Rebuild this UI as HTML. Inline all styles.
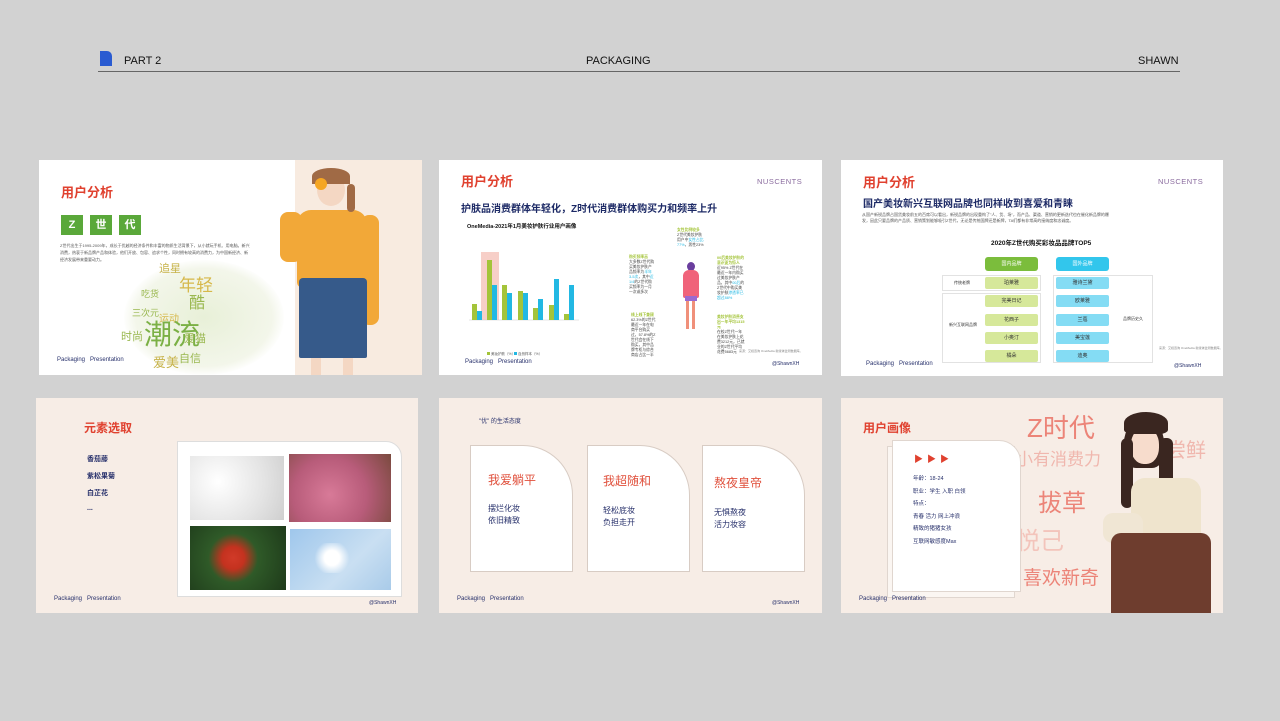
<!DOCTYPE html>
<html><head><meta charset="utf-8">
<style>
*{margin:0;padding:0;box-sizing:border-box}
body{width:1280px;height:721px;background:#d2d2d2;position:relative;overflow:hidden;font-family:"Liberation Sans","Noto Sans CJK SC",sans-serif}
.a{position:absolute}
.s{position:absolute;overflow:hidden}
.w{background:#fff}
.c{background:#f7ede6}
.red{color:#e0412f;font-weight:bold}
.navy{color:#27306b}
.ft{font-size:6px;color:#27306b;white-space:nowrap}
.hd{font-size:11px;color:#111;letter-spacing:0}
</style></head><body>
<!-- header -->
<div class="a" style="left:100px;top:51px;width:12px;height:15px;background:#2a5bd1;border-radius:0 5px 0 0"></div>
<div class="a hd" style="left:124px;top:55px">PART 2</div>
<div class="a hd" style="left:586px;top:55px">PACKAGING</div>
<div class="a hd" style="left:1138px;top:55px">SHAWN</div>
<div class="a" style="left:98px;top:71px;width:1082px;height:1px;background:#666"></div>

<!-- slide1 -->
<div class="s w" style="left:39px;top:160px;width:383px;height:215px">
 <div class="a red" style="left:22px;top:22px;font-size:13px">用户分析</div>
 <div class="a" style="left:22px;top:55px;width:22px;height:20px;background:#5aa83a;color:#fff;font-weight:bold;font-size:11px;text-align:center;line-height:20px">Z</div>
 <div class="a" style="left:51px;top:55px;width:22px;height:20px;background:#5aa83a;color:#fff;font-weight:bold;font-size:11px;text-align:center;line-height:20px">世</div>
 <div class="a" style="left:80px;top:55px;width:22px;height:20px;background:#5aa83a;color:#fff;font-weight:bold;font-size:11px;text-align:center;line-height:20px">代</div>
 <div class="a" style="left:21px;top:82px;width:190px;font-size:4px;line-height:7px;color:#555">Z世代出生于1995-2009年，成长于优越的经济条件和丰富的物质生活背景下，从小就玩手机、用电脑。新兴消费，热衷于新品牌产品和体验，他们开放、包容、追求个性，同时拥有较高的消费力，为中国新经济、新经济发展带来重要动力。</div>
 <div class="a" style="left:85px;top:100px;width:160px;height:115px;border-radius:50%;background:radial-gradient(ellipse,#e8f0d8 0%,#f3f6ea 60%,rgba(255,255,255,0) 72%)"></div>
 <div class="a" style="left:120px;top:100px;font-size:11px;color:#c7b34a">追星</div>
 <div class="a" style="left:140px;top:111px;font-size:17px;color:#d6b84a">年轻</div>
 <div class="a" style="left:102px;top:127px;font-size:9px;color:#9ab850">吃货</div>
 <div class="a" style="left:150px;top:129px;font-size:16px;color:#9ab850">酷</div>
 <div class="a" style="left:120px;top:150px;font-size:10px;color:#d6b84a">运动</div>
 <div class="a" style="left:93px;top:146px;font-size:9px;color:#9ab850">三次元</div>
 <div class="a" style="left:105px;top:153px;font-size:28px;color:#7bb045">潮流</div>
 <div class="a" style="left:82px;top:168px;font-size:11px;color:#9ab850">时尚</div>
 <div class="a" style="left:145px;top:170px;font-size:11px;color:#9ab850">爱猫</div>
 <div class="a" style="left:114px;top:192px;font-size:13px;color:#c7b34a">爱美</div>
 <div class="a" style="left:140px;top:190px;font-size:11px;color:#9ab850">自信</div>
 <div class="a ft" style="left:18px;top:197px">Packaging &nbsp; Presentation</div>
 <div class="a" style="left:256px;top:0;width:127px;height:215px;background:#f8ebe0"></div>
 <div class="a" style="left:258px;top:50px;width:70px;height:78px;background:#f2a838;border-radius:14px 14px 6px 6px"></div>
 <div class="a" style="left:241px;top:52px;width:22px;height:50px;background:#f2a838;border-radius:8px"></div>
 <div class="a" style="left:322px;top:55px;width:18px;height:110px;background:#f2a838;border-radius:8px"></div>
 <div class="a" style="left:278px;top:14px;width:28px;height:32px;background:#f4d7c3;border-radius:50%"></div>
 <div class="a" style="left:273px;top:8px;width:38px;height:16px;background:#a06a45;border-radius:50% 50% 0 0"></div>
 <div class="a" style="left:308px;top:24px;width:8px;height:28px;background:#a06a45;border-radius:4px"></div>
 <div class="a" style="left:276px;top:18px;width:12px;height:12px;background:#f5a623;border-radius:50%"></div>
 <div class="a" style="left:264px;top:115px;width:2px;height:2px"></div>
 <div class="a" style="left:260px;top:118px;width:68px;height:80px;background:#365a8a;border-radius:4px 4px 2px 2px"></div>
 <div class="a" style="left:272px;top:198px;width:10px;height:17px;background:#f4d7c3"></div>
 <div class="a" style="left:304px;top:198px;width:10px;height:17px;background:#f4d7c3"></div>
</div>

<!-- slide2 -->
<div class="s w" style="left:439px;top:160px;width:383px;height:215px">
 <div class="a red" style="left:22px;top:11px;font-size:13px">用户分析</div>
 <div class="a" style="left:318px;top:17px;font-size:7.5px;color:#8a6b9e;letter-spacing:.5px">NUSCENTS</div>
 <div class="a navy" style="left:22px;top:40px;font-size:10px;font-weight:bold;color:#1d2a66">护肤品消费群体年轻化，Z时代消费群体购买力和频率上升</div>
 <div class="a" style="left:28px;top:62px;font-size:5.5px;font-weight:bold;color:#111">OneMedia-2021年1月美妆护肤行业用户画像</div>
 <svg class="a" style="left:0;top:0" width="383" height="215">
  <rect x="42" y="92" width="18" height="68" fill="#f7cfc8"/>
  <line x1="30" y1="160" x2="140" y2="160" stroke="#ccc" stroke-width=".5"/>
  <g fill="#a4c43a">
   <rect x="33" y="144" width="5" height="16"/><rect x="48" y="100" width="5" height="60"/><rect x="63" y="125" width="5" height="35"/><rect x="79" y="131" width="5" height="29"/><rect x="94" y="148" width="5" height="12"/><rect x="110" y="145" width="5" height="15"/><rect x="125" y="154" width="5" height="6"/>
  </g>
  <g fill="#22b8e3">
   <rect x="38" y="151" width="5" height="9"/><rect x="53" y="125" width="5" height="35"/><rect x="68" y="133" width="5" height="27"/><rect x="84" y="133" width="5" height="27"/><rect x="99" y="139" width="5" height="21"/><rect x="115" y="119" width="5" height="41"/><rect x="130" y="125" width="5" height="35"/>
  </g>
  <rect x="48" y="192" width="3" height="3" fill="#a4c43a"/><rect x="75" y="192" width="3" height="3" fill="#22b8e3"/>
  <text x="52" y="195" font-size="3.5" fill="#555">美妆护肤（%）</text><text x="79" y="195" font-size="3.5" fill="#555">自然样本（%）</text>
 </svg>
 <div class="a" style="left:190px;top:95px;width:26px;font-size:3.8px;line-height:5px;color:#444"><b style="color:#a4c43a">购买频率高</b><br>大多数Z世代购买美妆护肤产品频率为<span style="color:#22b8e3">半年3-5次</span>，其中<span style="color:#22b8e3">近1/4</span>的Z世代购买频率为一月一次或多次</div>
 <div class="a" style="left:192px;top:153px;width:26px;font-size:3.8px;line-height:5px;color:#444"><b style="color:#a4c43a">线上线下兼顾</b><br>62.3%的Z世代最近一年在电商平台购买过，57.8%的Z世代会在线下购买，其中品牌专柜与综合商店占比一半</div>
 <div class="a" style="left:238px;top:68px;width:28px;font-size:3.8px;line-height:5px;color:#444"><b style="color:#a4c43a">女性比例较多</b><br>Z世代美妆护肤用户中<span style="color:#22b8e3">女性占比77%</span>，男性23%</div>
 <div class="a" style="left:278px;top:96px;width:28px;font-size:3.8px;line-height:5px;color:#444"><b style="color:#a4c43a">00后美妆护肤的意识更为惊人</b><br>近95% Z世代在最近一年内购买过美妆护肤产品，其中<span style="color:#22b8e3">00后</span>的Z世代中购买美妆护肤<span style="color:#22b8e3">渗透率已超过88%</span></div>
 <div class="a" style="left:278px;top:155px;width:28px;font-size:3.8px;line-height:5px;color:#444"><b style="color:#a4c43a">美妆护肤消费支出一年平均1315元</b><br>在校Z世代一年在美妆护肤上花费3212元，已就业的Z世代平均花费5683元</div>
 <div class="a" style="left:248px;top:102px;width:8px;height:9px;background:#6a3e9e;border-radius:50%"></div>
 <div class="a" style="left:244px;top:110px;width:16px;height:28px;background:#f0637a;border-radius:6px 6px 2px 2px"></div>
 <div class="a" style="left:246px;top:136px;width:12px;height:5px;background:#9a6ad0"></div>
 <div class="a" style="left:247px;top:141px;width:3px;height:28px;background:#f0907a"></div>
 <div class="a" style="left:253px;top:141px;width:3px;height:28px;background:#f0907a"></div>
 <div class="a" style="left:300px;top:189px;font-size:3px;color:#888">来源：艾媒咨询 OneMedia 新媒体监测数据库。</div>
 <div class="a ft" style="left:26px;top:199px">Packaging &nbsp; Presentation</div>
 <div class="a ft" style="left:333px;top:201px;font-size:5px">@ShawnXH</div>
</div>

<!-- slide3 -->
<div class="s w" style="left:841px;top:160px;width:382px;height:216px">
 <div class="a red" style="left:22px;top:12px;font-size:13px">用户分析</div>
 <div class="a" style="left:317px;top:17px;font-size:7.5px;color:#8a6b9e;letter-spacing:.5px">NUSCENTS</div>
 <div class="a" style="left:22px;top:35px;font-size:10px;font-weight:bold;color:#1d2a66">国产美妆新兴互联网品牌也同样收到喜爱和青睐</div>
 <div class="a" style="left:21px;top:52px;width:250px;font-size:4px;line-height:6px;color:#555">从国产新锐品牌占国货美妆前五的百席可以看出，新锐品牌的出现重构了"人、货、场"，而产品、渠道、营销的更新迭代也在催化新品牌的爆发，因此只要品牌的产品质、营销策划能够吸引Z世代，无论是传统国牌还是新牌，TA们都有非常高的接纳度和忠诚度。</div>
 <div class="a" style="left:150px;top:77px;font-size:6.5px;font-weight:bold;color:#111">2020年Z世代购买彩妆品品牌TOP5</div>
 <div class="a" style="left:144px;top:97px;width:53px;height:14px;background:#7bbd3c;border-radius:3px;color:#fff;font-size:5px;text-align:center;line-height:14px">国内品牌</div>
 <div class="a" style="left:215px;top:97px;width:53px;height:14px;background:#32c6ec;border-radius:3px;color:#fff;font-size:5px;text-align:center;line-height:14px">国外品牌</div>
 <div class="a" style="left:101px;top:115px;width:99px;height:16px;border:1px solid #e2e2e2"></div>
 <div class="a" style="left:101px;top:133px;width:99px;height:70px;border:1px solid #e2e2e2"></div>
 <div class="a" style="left:212px;top:115px;width:100px;height:88px;border:1px solid #e2e2e2"></div>
 <div class="a" style="left:113px;top:120px;font-size:4px;color:#333">传统老牌</div>
 <div class="a" style="left:108px;top:162px;font-size:4px;color:#333">新兴互联网品牌</div>
 <div class="a" style="left:282px;top:156px;font-size:4px;color:#333">品牌历史久</div>
 <div class="a" style="left:144px;top:117px;width:53px;height:12px;background:#d6e89a;border-radius:2px;font-size:5px;text-align:center;line-height:12px;color:#333">珀莱雅</div>
 <div class="a" style="left:144px;top:135px;width:53px;height:12px;background:#d6e89a;border-radius:2px;font-size:5px;text-align:center;line-height:12px;color:#333">完美日记</div>
 <div class="a" style="left:144px;top:154px;width:53px;height:12px;background:#d6e89a;border-radius:2px;font-size:5px;text-align:center;line-height:12px;color:#333">花西子</div>
 <div class="a" style="left:144px;top:172px;width:53px;height:12px;background:#d6e89a;border-radius:2px;font-size:5px;text-align:center;line-height:12px;color:#333">小奥汀</div>
 <div class="a" style="left:144px;top:190px;width:53px;height:12px;background:#d6e89a;border-radius:2px;font-size:5px;text-align:center;line-height:12px;color:#333">橘朵</div>
 <div class="a" style="left:215px;top:117px;width:53px;height:12px;background:#84dcf4;border-radius:2px;font-size:5px;text-align:center;line-height:12px;color:#333">雅诗兰黛</div>
 <div class="a" style="left:215px;top:135px;width:53px;height:12px;background:#84dcf4;border-radius:2px;font-size:5px;text-align:center;line-height:12px;color:#333">欧莱雅</div>
 <div class="a" style="left:215px;top:154px;width:53px;height:12px;background:#84dcf4;border-radius:2px;font-size:5px;text-align:center;line-height:12px;color:#333">兰蔻</div>
 <div class="a" style="left:215px;top:172px;width:53px;height:12px;background:#84dcf4;border-radius:2px;font-size:5px;text-align:center;line-height:12px;color:#333">美宝莲</div>
 <div class="a" style="left:215px;top:190px;width:53px;height:12px;background:#84dcf4;border-radius:2px;font-size:5px;text-align:center;line-height:12px;color:#333">迪奥</div>
 <div class="a" style="left:318px;top:186px;font-size:3px;color:#888">来源：艾媒咨询 OneMedia 新媒体监测数据库。</div>
 <div class="a ft" style="left:25px;top:201px">Packaging &nbsp; Presentation</div>
 <div class="a ft" style="left:333px;top:203px;font-size:5px">@ShawnXH</div>
</div>

<!-- slide4 -->
<div class="s c" style="left:36px;top:398px;width:382px;height:215px">
 <div class="a red" style="left:48px;top:21px;font-size:12px">元素选取</div>
 <div class="a navy" style="left:51px;top:56px;font-size:7px;font-weight:bold">香茄藤</div>
 <div class="a navy" style="left:51px;top:73px;font-size:7px;font-weight:bold">紫松果菊</div>
 <div class="a navy" style="left:51px;top:90px;font-size:7px;font-weight:bold">白芷花</div>
 <div class="a navy" style="left:51px;top:107px;font-size:7px;font-weight:bold">...</div>
 <div class="a" style="left:141px;top:43px;width:225px;height:156px;background:#fff;border:1px solid #ddd;border-radius:0 16px 0 0"></div>
 <div class="a" style="left:154px;top:58px;width:94px;height:64px;background:radial-gradient(circle at 30% 40%,#fff,#e4e4e4 60%,#cfcfcf)"></div>
 <div class="a" style="left:253px;top:56px;width:102px;height:68px;background:radial-gradient(circle at 40% 60%,#d87a98,#b85c7a 50%,#7a4a3e)"></div>
 <div class="a" style="left:154px;top:128px;width:96px;height:64px;background:radial-gradient(circle at 45% 50%,#d13a28 0,#c4321f 18%,#2f5a28 40%,#1e3a1a)"></div>
 <div class="a" style="left:254px;top:131px;width:101px;height:61px;background:linear-gradient(135deg,#9fc7ec,#c9dff2 60%,#a9cbe9)"></div>
 <div class="a" style="left:276px;top:145px;width:40px;height:30px;background:radial-gradient(circle,#fff 30%,rgba(255,255,255,0) 70%)"></div>
 <div class="a ft" style="left:18px;top:198px">Packaging &nbsp; Presentation</div>
 <div class="a ft" style="left:333px;top:202px;font-size:5px">@ShawnXH</div>
</div>

<!-- slide5 -->
<div class="s c" style="left:439px;top:398px;width:383px;height:215px">
 <div class="a navy" style="left:40px;top:18px;font-size:6px">"优" 的生活态度</div>
 <div class="a" style="left:31px;top:47px;width:103px;height:127px;background:#fff;border:1px solid #d8ccc4;border-radius:0 50px 0 0"></div>
 <div class="a" style="left:148px;top:47px;width:103px;height:127px;background:#fff;border:1px solid #d8ccc4;border-radius:0 50px 0 0"></div>
 <div class="a" style="left:263px;top:47px;width:103px;height:127px;background:#fff;border:1px solid #d8ccc4;border-radius:0 50px 0 0"></div>
 <div class="a" style="left:49px;top:73px;font-size:12px;color:#e0503c">我爱躺平</div>
 <div class="a" style="left:164px;top:74px;font-size:12px;color:#e0503c">我超随和</div>
 <div class="a" style="left:275px;top:76px;font-size:12px;color:#e0503c">熬夜皇帝</div>
 <div class="a navy" style="left:49px;top:105px;font-size:8px;line-height:12px">摆烂化妆<br>依旧精致</div>
 <div class="a navy" style="left:164px;top:107px;font-size:8px;line-height:12px">轻松底妆<br>负担走开</div>
 <div class="a navy" style="left:275px;top:109px;font-size:8px;line-height:12px">无惧熬夜<br>活力妆容</div>
 <div class="a ft" style="left:18px;top:198px">Packaging &nbsp; Presentation</div>
 <div class="a ft" style="left:333px;top:202px;font-size:5px">@ShawnXH</div>
</div>

<!-- slide6 -->
<div class="s c" style="left:841px;top:398px;width:382px;height:215px">
 <div class="a" style="left:186px;top:10px;font-size:26px;color:#ec8478;white-space:nowrap">Z时代</div>
 <div class="a" style="left:175px;top:47px;font-size:17px;color:#f0b7ae;white-space:nowrap">小有消费力</div>
 <div class="a" style="left:325px;top:36px;font-size:20px;color:#f0b7ae">尝鲜</div>
 <div class="a" style="left:197px;top:85px;font-size:24px;color:#ec8478">拔草</div>
 <div class="a" style="left:175px;top:123px;font-size:24px;color:#f3c4bb">悦己</div>
 <div class="a" style="left:182px;top:165px;font-size:19px;color:#ec8478;white-space:nowrap">喜欢新奇</div>
 <div class="a red" style="left:22px;top:21px;font-size:12px">用户画像</div>
 <div class="a" style="left:46px;top:48px;width:128px;height:152px;background:#fbf6f2;border:1px solid #e0d6cf"></div>
 <div class="a" style="left:51px;top:42px;width:129px;height:152px;background:#fff;border:1px solid #e0d6cf;border-radius:0 22px 0 0"></div>
 <div class="a" style="left:73px;top:54px;font-size:9px;color:#e0412f;letter-spacing:4px">▶▶▶</div>
 <div class="a navy" style="left:72px;top:75px;font-size:5.5px;line-height:12.5px">年龄：18-24<br>职业：学生 入职 白领<br>特点：<br>青春 活力 网上冲浪<br>精致的猪猪女孩<br>互联网敏感度Max</div>
 <div class="a" style="left:283px;top:20px;width:40px;height:50px;background:#3a2620;border-radius:50% 50% 30% 30%"></div>
 <div class="a" style="left:290px;top:30px;width:28px;height:36px;background:#f7dccc;border-radius:45%"></div>
 <div class="a" style="left:283px;top:14px;width:44px;height:22px;background:#3a2620;border-radius:50% 50% 20% 20%"></div>
 <div class="a" style="left:280px;top:40px;width:12px;height:70px;background:#3a2620;border-radius:6px"></div>
 <div class="a" style="left:318px;top:40px;width:14px;height:75px;background:#3a2620;border-radius:6px"></div>
 <div class="a" style="left:290px;top:80px;width:70px;height:100px;background:#efe4cd;border-radius:14px 14px 0 0"></div>
 <div class="a" style="left:262px;top:115px;width:40px;height:30px;background:#f0e6d4;border-radius:10px"></div>
 <div class="a" style="left:270px;top:135px;width:100px;height:80px;background:#6e3d2e;border-radius:10px 10px 0 0"></div>
 <div class="a ft" style="left:18px;top:198px">Packaging &nbsp; Presentation</div>
</div>
</body></html>
